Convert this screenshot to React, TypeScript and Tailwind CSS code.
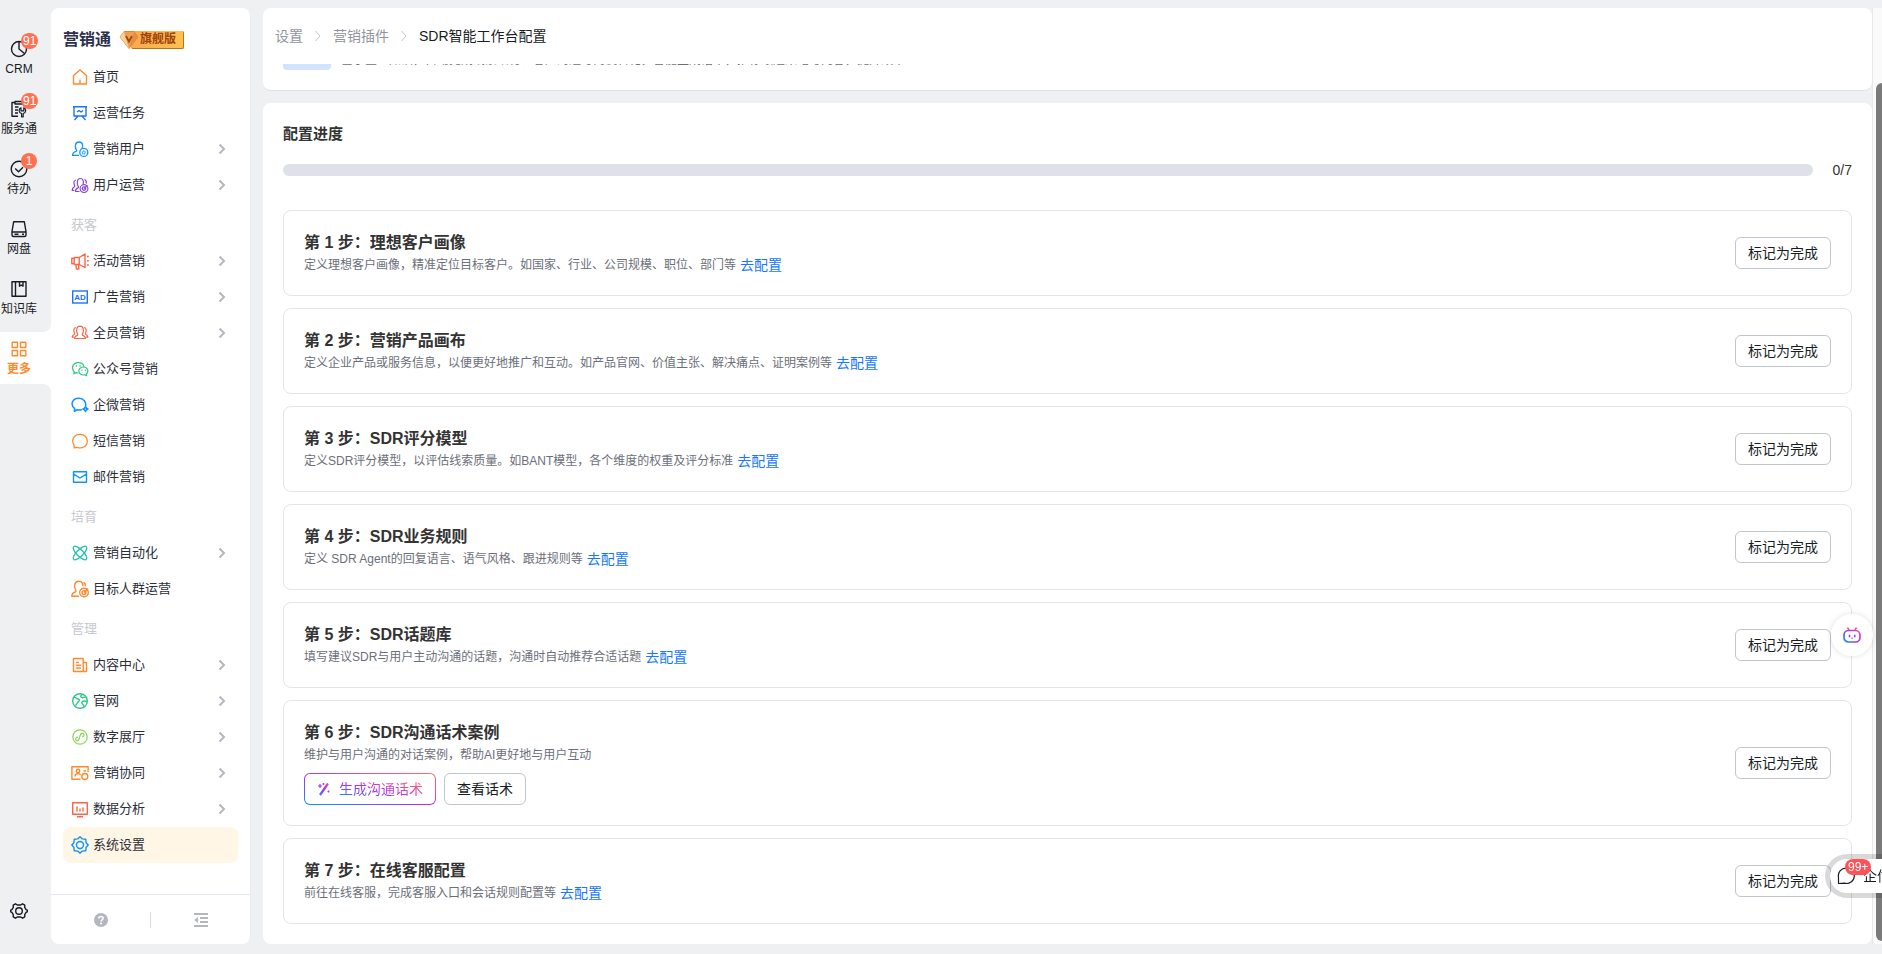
import type { ReactNode } from 'react'
import clsx from 'clsx'

interface IconProps {
  children: ReactNode
  color?: string
  size?: number
  width?: number
}

const Icon = ({ children, color = 'currentColor', size = 18, width = 1.2 }: IconProps) => (
  <svg
    width={size}
    height={size}
    viewBox="0 0 18 18"
    fill="none"
    stroke={color}
    strokeWidth={width}
    strokeLinejoin="round"
    className="shrink-0"
    aria-hidden="true"
  >
    {children}
  </svg>
)

const BLUE = '#0c94ff'
const DEEP_BLUE = '#1a72ff'
const ORANGE = '#ff8a2b'
const RED = '#ff6347'
const GREEN = '#2dc987'

const menuIcons: Record<string, ReactNode> = {
  home: (
    <Icon color={ORANGE} width={1.4}>
      <path d="M2.500 7.500 9 2l6.500 5.500V16h-13zM9 11.500V16" />
    </Icon>
  ),
  task: (
    <Icon color={DEEP_BLUE} width={1.4}>
      <path d="M2 2.700h14M3 2.700v9.300h12V2.700M6 8l2-1.500L10 8l2-1.500M7 12l-3.500 4M11 12l3.500 4" />
    </Icon>
  ),
  user: (
    <Icon color={BLUE} width={1.3}>
      <path d="M8 15.400H1.600c0-2.600 1.200-3.400 3.400-4 .8-.3.900-1 .3-1.800C3.600 7 4 2 8 2s4.300 4 3 6" />
      <circle cx="12.800" cy="12.400" r="4" />
      <path d="m12.800 10.500.6 1.300 1.300.2-1 .9.300 1.300-1.200-.6-1.200.6.300-1.300-1-.9 1.300-.2z" strokeWidth=".8" />
    </Icon>
  ),
  operate: (
    <Icon color="#8247e0">
      <path d="M8.500 15.500H4.500c0-2.500.8-3 2.400-3.600.9-.4.700-1 .2-1.700C5.600 7.500 6 2.500 9.200 2.500c3 0 3.600 3 2.900 5.500" />
      <path d="M5 4C2.500 4.500 2.600 7.500 3.600 9.500c.4.900 0 1.400-.8 1.800-1 .5-1.600 1-1.600 3h2M13.500 3.500c1.500.5 2.100 2.200 1.700 4" />
      <circle cx="13" cy="12.600" r="3.900" />
      <circle cx="13" cy="12.600" r="1.700" />
      <path d="m13 12.600 3.500-3.300" />
    </Icon>
  ),
  activity: (
    <Icon color={RED} width={1.4}>
      <path d="M.8 6.200h2.400v5.600H.8zM3.200 5.500h5v7h-5M8.200 5.500 14 2v13.500l-5.800-3M4.800 12.500l.7 4.500H7.800V12.500" />
      <path d="M16 4.500h1.800M16 8.800h1.800M16 13h1.800" />
    </Icon>
  ),
  ad: (
    <svg width="18" height="18" viewBox="0 0 18 18" className="shrink-0" aria-hidden="true">
      <rect x="1.700" y="3" width="14.600" height="12" fill="none" stroke={DEEP_BLUE} strokeWidth="1.400" />
      <text x="9" y="12" textAnchor="middle" fontSize="8" fontWeight="700" fill={DEEP_BLUE}>
        AD
      </text>
    </svg>
  ),
  staff: (
    <Icon color={RED}>
      <path d="M3.500 14.500c0-2 1-2.500 2.600-3.100.9-.4.700-1 .2-1.700C5 7 5.300 2.200 9 2.200s4 4.800 2.700 7.500c-.5.700-.7 1.300.2 1.700 1.600.6 2.600 1.100 2.600 3.100z" />
      <path d="M5 3.500C2.200 3.800 2.500 7 3.500 9c.3 1-.1 1.400-.8 1.700-1 .4-1.500 1-1.500 2.500h2M13 3.500c2.800.3 2.500 3.500 1.500 5.500-.3 1 .1 1.400.8 1.700 1 .4 1.500 1 1.500 2.500h-2" />
    </Icon>
  ),
  wechat: (
    <Icon color={GREEN}>
      <path d="M7.500 13c-.8 0-1.600-.1-2.300-.4L2.800 13.800l.5-2.100C.2 9 .9 3 7 2.600c3.500-.1 5.700 2 6.100 4.200" />
      <path d="M12.500 7c-2.700 0-4.700 1.800-4.700 4 0 2.900 3 4.500 5.900 3.800l2 1-.4-1.800C18.300 11.500 16.500 7 12.500 7z" />
      <path d="M4.700 6h1.200M8.400 6h1.200M10.500 10.300h1M13.800 10.300h1" strokeWidth="1.500" />
    </Icon>
  ),
  wecom: (
    <Icon color={BLUE} width={1.5}>
      <path d="M11 13.600c-1.500.6-3.300.6-4.800.2L3.300 15.200l.4-2.600C-1 9 1 2.200 7.800 2.200c5 0 7.700 4 6.700 7.800" />
      <path d="M14.500 10.300c.2 1.700.9 2.300 2.500 2.600-1.600.4-2.200 1-2.500 2.600-.3-1.600-1-2.200-2.600-2.600 1.700-.3 2.300-.9 2.600-2.600z" />
    </Icon>
  ),
  sms: (
    <Icon color={ORANGE} width={1.3}>
      <path d="M3 15.800V12.900C.2 9 2.300 2.300 9 2.300c4.300 0 7.300 3 7.300 6.700 0 5.300-5.300 8-9.800 6.300z" />
    </Icon>
  ),
  mail: (
    <Icon color={BLUE} width={1.4}>
      <path d="M2.500 3.700h13v10.600h-13zM2.500 6.200 9 10l6.500-3.800" />
    </Icon>
  ),
  auto: (
    <Icon color="#1fc3ad" width={1.3}>
      <ellipse cx="9" cy="9" rx="9" ry="3.300" transform="rotate(45 9 9)" />
      <ellipse cx="9" cy="9" rx="9" ry="3.300" transform="rotate(-45 9 9)" />
    </Icon>
  ),
  crowd: (
    <Icon color={ORANGE} width={1.4}>
      <path d="M8 16.200H.8c0-2.800 1-3.500 3.400-4.200.9-.4 1-1 .4-2C2.800 7 3.200 1.300 7.800 1.300c3.300 0 4.200 2.700 4 5M12.500 2.500c1.700.6 2 2.200 1.800 3.700" />
      <circle cx="13" cy="12.500" r="4.300" />
      <circle cx="13" cy="12.500" r="1.900" />
      <path d="m13 12.500 4-4" />
    </Icon>
  ),
  content: (
    <Icon color={ORANGE} width={1.4}>
      <path d="M2.500 2.500h9.700v13H2.500zM12.200 6.500h3.300v9h-3.300M5 6.500h3M5 9.200h5M5 12h5" />
    </Icon>
  ),
  site: (
    <Icon color={GREEN} width={1.4}>
      <circle cx="9" cy="9" r="7.300" />
      <path d="M3 5c2 .2 2.500 1.800 4 2 1.700.2 2 1.500.5 2.500-1 .7-1.500 2-3 4M11.500 2.200c-2 1.500-2.600 2.800-.6 3.500 1.500.5 2.500-.8 4-.7M16.300 10c-2-1.500-5-1.500-5.500.5-.3 1.500 2 1.500 2 4.500" />
    </Icon>
  ),
  hall: (
    <Icon color="#8bd45a">
      <circle cx="9" cy="9" r="7.200" />
      <path d="M7 9.200c-3 0-3 3.800-.7 3.600C9.500 12.500 8 5.600 11 5.200c2.500-.2 2.800 3.200.2 3.600" />
    </Icon>
  ),
  collab: (
    <Icon color={ORANGE} width={1.4}>
      <path d="M9.500 15.300H.9V2.700h16.200V8M12.500 6.800h2.500" />
      <circle cx="7" cy="7" r="1.700" />
      <path d="M4 12.500c.3-2.200 1.500-3 3-3 1.300 0 2 .5 2.500 1.300" />
      <circle cx="13.800" cy="12.500" r="3" />
      <path d="M12 9.500v1M15.600 9.500v1" />
    </Icon>
  ),
  data: (
    <Icon color={RED} width={1.4}>
      <path d="M1.700 2.700h14.600v11.600H1.700zM6 16.800h6M6 6.500v5M9 8.500v3M12 7.500v4" />
    </Icon>
  ),
  settings: (
    <Icon color={BLUE} width={1.4}>
      <path d="M9 .8 11.300 2.900 14.800 3.200 15.100 6.700 17.200 9 15.100 11.300 14.800 14.800 11.300 15.100 9 17.200 6.700 15.100 3.200 14.800 2.900 11.300 .8 9 2.900 6.700 3.200 3.200 6.700 2.900z" />
      <circle cx="9" cy="9" r="3.500" />
    </Icon>
  ),
}

interface MenuItem {
  icon: string
  label: string
  more?: boolean
  active?: boolean
}

const menuGroups: { title?: string; items: MenuItem[] }[] = [
  {
    items: [
      { icon: 'home', label: '首页' },
      { icon: 'task', label: '运营任务' },
      { icon: 'user', label: '营销用户', more: true },
      { icon: 'operate', label: '用户运营', more: true },
    ],
  },
  {
    title: '获客',
    items: [
      { icon: 'activity', label: '活动营销', more: true },
      { icon: 'ad', label: '广告营销', more: true },
      { icon: 'staff', label: '全员营销', more: true },
      { icon: 'wechat', label: '公众号营销' },
      { icon: 'wecom', label: '企微营销' },
      { icon: 'sms', label: '短信营销' },
      { icon: 'mail', label: '邮件营销' },
    ],
  },
  {
    title: '培育',
    items: [
      { icon: 'auto', label: '营销自动化', more: true },
      { icon: 'crowd', label: '目标人群运营' },
    ],
  },
  {
    title: '管理',
    items: [
      { icon: 'content', label: '内容中心', more: true },
      { icon: 'site', label: '官网', more: true },
      { icon: 'hall', label: '数字展厅', more: true },
      { icon: 'collab', label: '营销协同', more: true },
      { icon: 'data', label: '数据分析', more: true },
      { icon: 'settings', label: '系统设置', active: true },
    ],
  },
]

const railItems: { label: string; badge?: string; icon: ReactNode }[] = [
  {
    label: 'CRM',
    badge: '91',
    icon: (
      <>
        <circle cx="9" cy="9" r="7.500" />
        <path d="M9 1.500V9l5.500 4.500" />
      </>
    ),
  },
  {
    label: '服务通',
    badge: '91',
    icon: (
      <>
        <path d="M8 16.300H2V2.500h3M5 1.500h7v2.500H5zM12 2.500h3v4M5 7h3.500M5 10h3M5 13h3" />
        <path d="M11 7.800c-2.600 1-2.600 4.800.6 5.700v3.300h1.600v-3.300c3.200-.9 3.200-4.700.6-5.700v3h-2.800z" strokeWidth="1.200" />
      </>
    ),
  },
  {
    label: '待办',
    badge: '1',
    icon: (
      <>
        <circle cx="9" cy="9" r="7.800" />
        <path d="m5.200 8.500 3.300 3.300L13 7.300" />
      </>
    ),
  },
  {
    label: '网盘',
    icon: <path d="M3.700 1.700h10.600l1.700 9.800v3.500q0 1.500-1.500 1.500h-11Q2 16.500 2 15v-3.500zM2 12h14M4.500 14.300h4M12 14.300h2" />,
  },
  {
    label: '知识库',
    icon: <path d="M2 1.700h14v14.600H2zM5.500 1.700v14.600M9.500 1.700v4.500l1.700-1.200 1.800 1.200V1.700" />,
  },
]

interface Step {
  title: string
  desc: string
  link?: boolean
}

const steps: Step[] = [
  {
    title: '理想客户画像',
    desc: '定义理想客户画像，精准定位目标客户。如国家、行业、公司规模、职位、部门等',
    link: true,
  },
  {
    title: '营销产品画布',
    desc: '定义企业产品或服务信息，以便更好地推广和互动。如产品官网、价值主张、解决痛点、证明案例等',
    link: true,
  },
  {
    title: 'SDR评分模型',
    desc: '定义SDR评分模型，以评估线索质量。如BANT模型，各个维度的权重及评分标准',
    link: true,
  },
  { title: 'SDR业务规则', desc: '定义 SDR Agent的回复语言、语气风格、跟进规则等', link: true },
  { title: 'SDR话题库', desc: '填写建议SDR与用户主动沟通的话题，沟通时自动推荐合适话题', link: true },
  { title: 'SDR沟通话术案例', desc: '维护与用户沟通的对话案例，帮助AI更好地与用户互动' },
  { title: '在线客服配置', desc: '前往在线客服，完成客服入口和会话规则配置等', link: true },
]

const Rail = () => (
  <nav className="flex w-[51px] shrink-0 flex-col bg-white text-xs text-[#181c25]">
    <div className="flex flex-col gap-2 rounded-br-lg bg-[#eff0f2] pt-8 pb-2">
      {railItems.map((item) => (
        <button key={item.label} className="relative flex h-[52px] w-[38px] flex-col items-center pt-2">
          <Icon width={1.4}>{item.icon}</Icon>
          <span className="mt-0.5 leading-[18px] whitespace-nowrap">{item.label}</span>
          {item.badge && (
            <span className="absolute top-px left-[21px] h-4 min-w-4 rounded-full bg-[#ff7051] px-[2px] text-center text-xs leading-4 text-white">
              {item.badge}
            </span>
          )}
        </button>
      ))}
    </div>
    <button className="flex h-[52px] w-[38px] flex-col items-center pt-2 font-bold text-[#ff8a2b]">
      <Icon width={1.4}>
        <path d="M2.200 2.200h5.300v5.300H2.200zM10.500 2.200h5.300v5.300h-5.300zM2.200 10.500h5.300v5.300H2.200zM10.500 10.500h5.300v5.300h-5.300z" />
      </Icon>
      <span className="mt-0.5 leading-[18px]">更多</span>
    </button>
    <div className="flex flex-1 flex-col justify-end rounded-tr-lg bg-[#eff0f2] pb-[34px]">
      <button aria-label="设置" className="flex w-[38px] justify-center">
        <Icon width={1.4}>
          <path d="M5.500 1.800 7.300 3h3.400l1.800-1.200 2.300 1.400-.1 2.200 1.400 2.200 1.200.6v1.600l-1.200.6-1.400 2.200.1 2.200-2.300 1.400-1.800-1.200H7.300l-1.800 1.200-2.300-1.400.1-2.200-1.400-2.200-1.200-.6V8.200l1.200-.6 1.400-2.200-.1-2.200z" />
          <circle cx="9" cy="9" r="3.300" />
        </Icon>
      </button>
    </div>
  </nav>
)

const EditionBadge = () => (
  <span className="relative ml-5 flex h-[18px] items-center rounded-xs border-r border-b border-[#b9731f] bg-linear-to-r from-[#f9a94e] to-[#ffc04d] pr-[7px] pl-[9px] text-xs font-bold text-[#a04312]">
    <svg width="20" height="18" viewBox="0 0 20 18" className="absolute top-0 -left-3" aria-hidden="true">
      <path d="M5 .5h10l4 5.500-9 11.500L1 6z" fill="#f0a04f" stroke="#d98a3d" strokeLinejoin="round" />
      <path d="M5 .5 1 6l9 11.500L6 5z" fill="#fbd09b" />
      <path d="m15 .5 4 5.500-9 11.500L14 5z" fill="#e88d3c" />
      <path d="m7 5 3 5.500L13 5" fill="none" stroke="#9a4a14" strokeWidth="1.800" />
    </svg>
    旗舰版
  </span>
)

const Sidebar = () => (
  <aside className="mt-2 mb-[10px] flex w-[200px] shrink-0 flex-col rounded-lg border-r border-[#e9ebf5] bg-white">
    <div className="flex h-[51px] items-center px-3 pt-3">
      <h1 className="text-base font-bold text-[#2a304d]">营销通</h1>
      <EditionBadge />
    </div>
    <nav className="flex-1 px-3 text-[13px] text-[#2b2f3a]">
      {menuGroups.map((group, i) => (
        <div key={i}>
          {group.title && <div className="flex h-10 items-center px-2 pt-2 pb-1 text-[#c6c9d0]">{group.title}</div>}
          {group.items.map((item) => (
            <a
              key={item.label}
              href="#"
              className={clsx('flex h-9 items-center gap-1 rounded-lg pr-[10px] pl-2', item.active && 'bg-[#fff6e5]')}
            >
              {menuIcons[item.icon]}
              <span className="flex-1">{item.label}</span>
              {item.more && (
                <svg width="12" height="12" viewBox="0 0 12 12" fill="none" stroke="#b4b7c1" strokeWidth="2" aria-hidden="true">
                  <path d="m3.500 1.500 4.500 4.500-4.500 4.500" />
                </svg>
              )}
            </a>
          ))}
        </div>
      ))}
    </nav>
    <div className="flex h-[50px] items-center border-t border-[#e3e8f2] text-[#b4b7c1]">
      <button aria-label="帮助" className="flex flex-1 justify-center">
        <svg width="14" height="14" viewBox="0 0 14 14" aria-hidden="true">
          <circle cx="7" cy="7" r="7" fill="currentColor" />
          <path d="M4.800 5.500C4.800 2.800 9.200 2.800 9.200 5.300 9.200 6.800 7 6.900 7 8.500" fill="none" stroke="#fff" strokeWidth="1.500" />
          <circle cx="7" cy="10.600" r="1" fill="#fff" />
        </svg>
      </button>
      <span className="h-4 w-px bg-[#d9dbe3]" />
      <button aria-label="收起菜单" className="flex flex-1 justify-center">
        <svg width="14" height="14" viewBox="0 0 14 14" fill="currentColor" aria-hidden="true">
          <path d="M0 0h14v2H0zM6 4h8v2H6zM6 8h8v2H6zM0 12h14v2H0zM4 4v6L0 7z" />
        </svg>
      </button>
    </div>
  </aside>
)

const CrumbArrow = () => (
  <svg width="8" height="12" viewBox="0 0 8 12" fill="none" stroke="#c1c5ce" className="mx-[11px]" aria-hidden="true">
    <path d="M1.500 1 6 6l-4.500 5" />
  </svg>
)

const Breadcrumb = () => (
  <header className="flex h-14 shrink-0 items-center rounded-t-lg bg-white px-3 text-sm text-[#91959e]">
    <a href="#">设置</a>
    <CrumbArrow />
    <a href="#">营销插件</a>
    <CrumbArrow />
    <span className="text-[#181c25]">SDR智能工作台配置</span>
  </header>
)

const StepCard = ({ step, index }: { step: Step; index: number }) => (
  <li className="flex items-center justify-between rounded-lg border border-[#e5e5e7] p-5">
    <div>
      <h3 className="text-base leading-6 font-bold text-[#333]">
        第 {index + 1} 步：{step.title}
      </h3>
      <div className="flex h-5 items-center gap-1 text-xs text-[#6b6f7a]">
        <p>{step.desc}</p>
        {step.link && (
          <a href="#" className="text-sm leading-[18px] text-[#1677ff]">
            去配置
          </a>
        )}
      </div>
      {!step.link && (
        <div className="mt-2 flex gap-2 text-sm">
          <button className="h-8 rounded-md bg-[linear-gradient(to_top_right,#0099ff,#a033ff_42%,#ff5280_78%,#ff7061)] p-px">
            <span className="flex h-full items-center gap-2 rounded-[5px] bg-white px-3">
              <svg width="14" height="14" viewBox="0 0 14 14" fill="none" stroke="url(#wand)" aria-hidden="true">
                <defs>
                  <linearGradient id="wand" x1="0" y1="14" x2="14" y2="0" gradientUnits="userSpaceOnUse">
                    <stop stopColor="#0099ff" />
                    <stop offset=".5" stopColor="#a033ff" />
                    <stop offset="1" stopColor="#ff5280" />
                  </linearGradient>
                </defs>
                <path d="m3 13 8-11.500" strokeWidth="2.200" />
                <path d="M3 2v4M1 4h4M6.500 1v2M5.500 2h2M11.500 8.500v2M10.500 9.500h2" strokeWidth="1.200" />
              </svg>
              <span className="bg-[linear-gradient(to_top_right,#0099ff,#a033ff_42%,#ff5280_78%,#ff7061)] bg-clip-text text-transparent">
                生成沟通话术
              </span>
            </span>
          </button>
          <button className="h-8 rounded-md border border-[#c1c5ce] px-3 text-[#181c25]">查看话术</button>
        </div>
      )}
    </div>
    <button className="h-8 shrink-0 rounded-md border border-[#c1c5ce] px-3 text-sm text-[#181c25]">标记为完成</button>
  </li>
)

const FloatingTools = () => (
  <>
    <button
      aria-label="AI 助手"
      className="fixed right-[9px] bottom-[298px] flex size-[42px] items-center justify-center rounded-full bg-white shadow-[0_0_6px_rgba(0,0,0,0.12)]"
    >
      <svg width="18" height="18" viewBox="0 0 18 18" fill="none" aria-hidden="true">
        <defs>
          <linearGradient id="bot" x1="1" y1="17" x2="17" y2="2" gradientUnits="userSpaceOnUse">
            <stop stopColor="#0099ff" />
            <stop offset=".5" stopColor="#a033ff" />
            <stop offset="1" stopColor="#ff5280" />
          </linearGradient>
        </defs>
        <rect x="1" y="4.500" width="16" height="11.500" rx="4.500" stroke="url(#bot)" strokeWidth="1.700" />
        <path d="M4.500 1.500 6 4M13.500 1.500 12 4" stroke="#ff5263" strokeWidth="1.500" />
        <path d="M6.500 8.800v2.400M11.800 8.800v2.400" stroke="#8b3dff" strokeWidth="1.500" />
        <path d="M8.300 12q.8.700 1.600 0" stroke="#a033ff" />
      </svg>
    </button>
    <div className="fixed right-0 bottom-14 h-11 w-[57px] overflow-hidden rounded-l-full bg-black/15 py-[5px] pl-[5px]">
      <button className="flex h-full w-20 items-center gap-2 rounded-l-full bg-white pl-[7px] text-sm text-[#181c25]">
        <Icon>
          <path d="M1.500 16.500v-6C.5 5 4.500 1 9.500 1.200c5 .2 8 4 7.800 8-.3 5-5 8.300-9.800 7z" />
        </Icon>
        企信
      </button>
      <span className="absolute top-[5px] left-5 h-4 rounded-full bg-[#ff5257] px-[3px] text-xs leading-4 text-white">99+</span>
    </div>
  </>
)

export default function App() {
  return (
    <div className="flex h-screen overflow-hidden bg-[#eff0f2] font-['Liberation_Sans','Noto_Sans_CJK_SC',sans-serif]">
      <Rail />
      <Sidebar />
      <main className="mt-2 mb-[10px] ml-3 flex min-w-0 flex-1 flex-col">
        <Breadcrumb />
        <div className="flex-1 overflow-hidden">
          {/* intro card, scrolled up under the breadcrumb */}
          <section className="-mt-[22px] flex h-[49px] items-start gap-[10px] rounded-b-lg border-b border-[#dfe0e3] bg-white px-5">
            <span className="h-7 w-12 shrink-0 rounded bg-[#d1e3ff]" />
            <p className="pt-[10px] text-xs leading-4 text-[#6b6f7a]">
              基于企业知识，自动完成线索培育、客户沟通与商机转化，智能生成话术，推荐跟进策略与内容，提升效率
            </p>
          </section>
          <section className="mt-3 rounded-lg bg-white p-5">
            <h2 className="text-[15px] leading-[22px] font-bold text-[#333]">配置进度</h2>
            <div className="mt-[15px] flex h-5 items-center gap-5">
              <div role="progressbar" aria-valuenow={0} aria-valuemax={7} className="h-3 flex-1 rounded-full bg-[#dee1e8]" />
              <span className="text-sm text-[#333]">0/7</span>
            </div>
            <ol className="mt-[30px] flex flex-col gap-3">
              {steps.map((step, i) => (
                <StepCard key={step.title} step={step} index={i} />
              ))}
            </ol>
          </section>
        </div>
      </main>
      <div className="mt-2 mb-[10px] flex w-[10px] shrink-0 justify-end border-l border-[#e8e8e8] bg-[#fafafa] pt-[75px] pb-[3px]">
        <div className="w-[6px] rounded-l-full bg-[#7a7a7a]" />
      </div>
      <FloatingTools />
    </div>
  )
}
